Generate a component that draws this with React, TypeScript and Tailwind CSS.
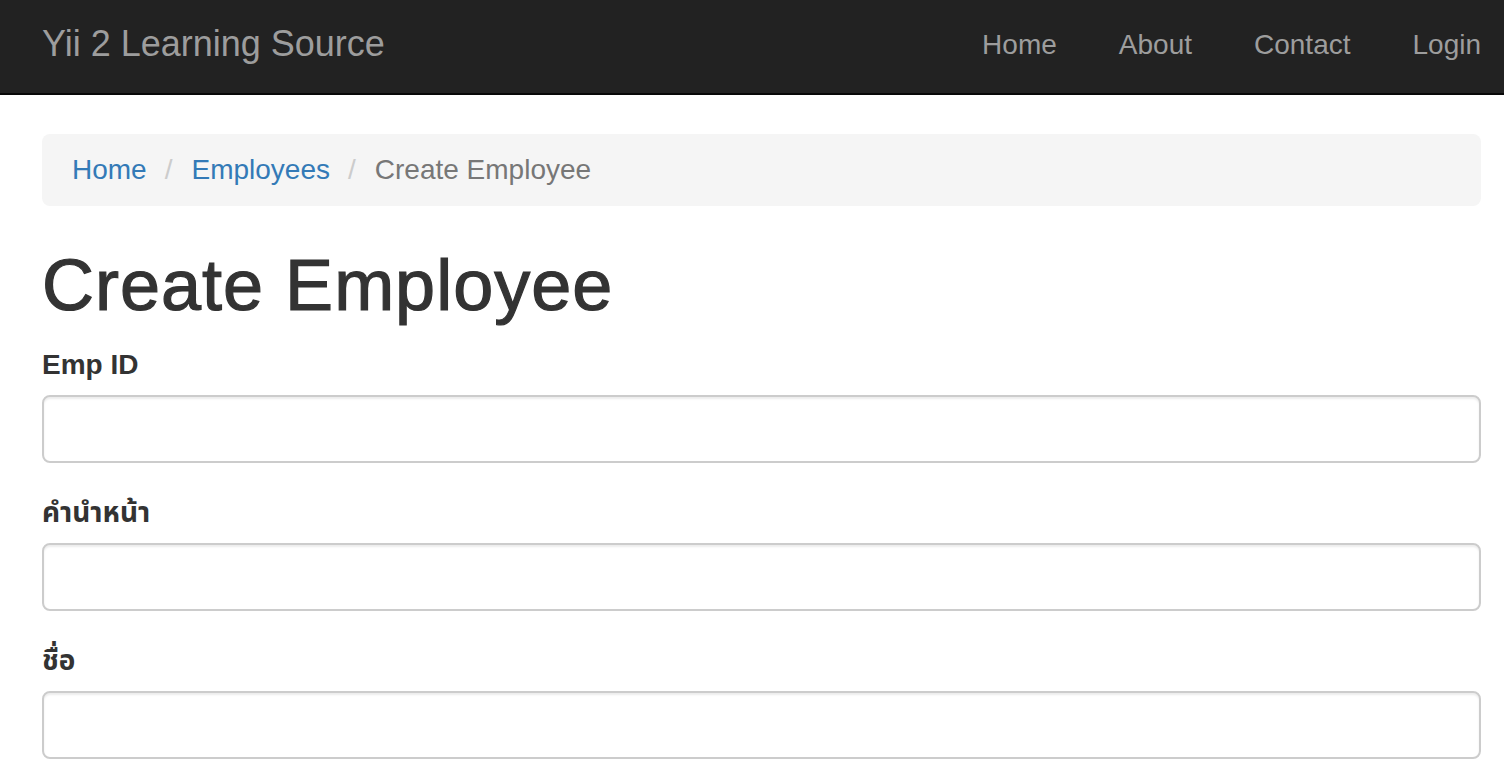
import React from "react";

const font = { fontFamily: '"Liberation Sans", "Noto Sans Thai", "Noto Sans", Loma, Garuda, sans-serif' };

function Field({ label }: { label: string }) {
  return (
    <div className="mb-[30px]">
      <label className="block mb-[10px] text-[28px] leading-[40px] font-bold text-[#333]">{label}</label>
      <input
        type="text"
        className="block w-full h-[68px] rounded-[8px] border-2 border-[#ccc] bg-white px-[24px] text-[28px] text-[#555] shadow-[inset_0_2px_2px_rgba(0,0,0,0.075)] outline-none"
      />
    </div>
  );
}

export default function App() {
  return (
    <div className="min-h-screen bg-white" style={font}>
      <nav className="h-[95px] bg-[#222] border-b-2 border-[#080808]">
        <div className="flex items-start justify-between pl-[42px] pr-[23px] pt-[24px]">
          <a className="text-[36px] leading-[40px] text-[#9d9d9d]">Yii 2 Learning Source</a>
          <ul className="flex gap-[62px] mt-px">
            {["Home", "About", "Contact", "Login"].map((t) => (
              <li key={t} className="text-[28px] leading-[40px] text-[#9d9d9d]">{t}</li>
            ))}
          </ul>
        </div>
      </nav>
      <main className="pl-[42px] pr-[23px] pt-[39px]">
        <ol className="flex items-center h-[72px] px-[30px] rounded-[8px] bg-[#f5f5f5] text-[28px] leading-[40px]">
          <li className="text-[#337ab7]">Home</li>
          <li className="text-[#ccc] px-[10px] ml-[8px] mr-[9px]">/</li>
          <li className="text-[#337ab7]">Employees</li>
          <li className="text-[#ccc] px-[10px] ml-[8px] mr-[9px]">/</li>
          <li className="text-[#777]">Create Employee</li>
        </ol>
        <h1 className="mt-[40px] mb-[20px] text-[72px] leading-[79px] text-[#333] font-medium tracking-[1px] [-webkit-text-stroke:1.2px_#333]">Create Employee</h1>
        <Field label="Emp ID" />
        <Field label="คำนำหน้า" />
        <Field label="ชื่อ" />
      </main>
    </div>
  );
}
